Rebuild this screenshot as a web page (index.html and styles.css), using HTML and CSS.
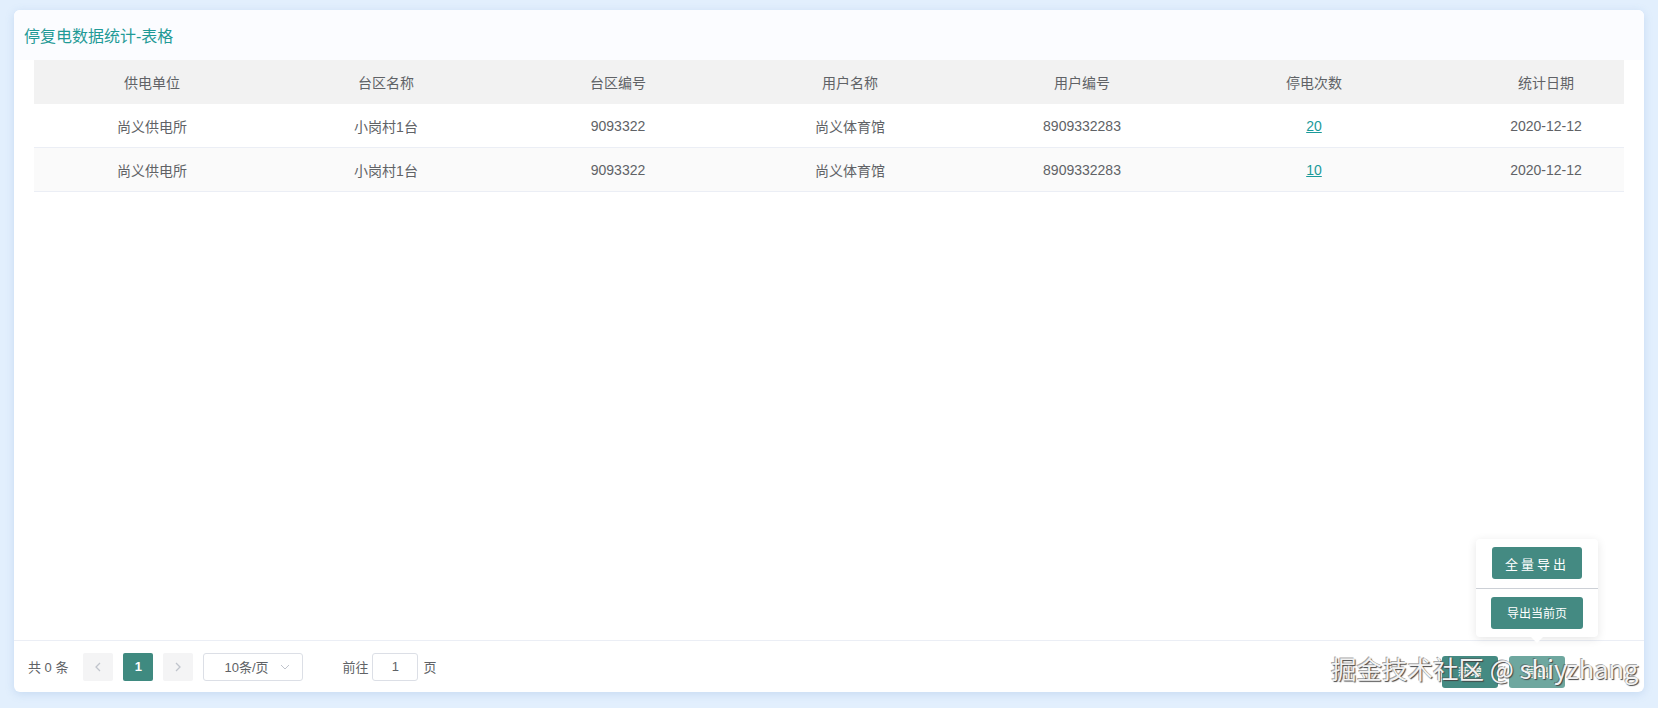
FILE: index.html
```html
<!DOCTYPE html>
<html lang="zh-CN">
<head>
<meta charset="utf-8">
<title>停复电数据统计-表格</title>
<link rel="stylesheet" href="styles.css">
</head>
<body>
<div class="card">
  <div class="card-header">停复电数据统计-表格</div>
  <div class="card-body">
    <div class="table-wrap">
      <div class="table">
        <div class="row head">
          <div class="cell">供电单位</div>
          <div class="cell">台区名称</div>
          <div class="cell">台区编号</div>
          <div class="cell">用户名称</div>
          <div class="cell">用户编号</div>
          <div class="cell">停电次数</div>
          <div class="cell">统计日期</div>
        </div>
        <div class="row">
          <div class="cell">尚义供电所</div>
          <div class="cell">小岗村1台</div>
          <div class="cell">9093322</div>
          <div class="cell">尚义体育馆</div>
          <div class="cell">8909332283</div>
          <div class="cell"><a class="link">20</a></div>
          <div class="cell">2020-12-12</div>
        </div>
        <div class="row striped">
          <div class="cell">尚义供电所</div>
          <div class="cell">小岗村1台</div>
          <div class="cell">9093322</div>
          <div class="cell">尚义体育馆</div>
          <div class="cell">8909332283</div>
          <div class="cell"><a class="link">10</a></div>
          <div class="cell">2020-12-12</div>
        </div>
      </div>
    </div>
  </div>
  <div class="footer">
    <div class="pagination">
      <span class="total">共 0 条</span>
      <span class="pbtn"><svg width="8" height="10" viewBox="0 0 8 10"><path d="M6 1 L2 5 L6 9" fill="none" stroke="#c0c4cc" stroke-width="1.3"/></svg></span>
      <span class="pager active">1</span>
      <span class="pbtn"><svg width="8" height="10" viewBox="0 0 8 10"><path d="M2 1 L6 5 L2 9" fill="none" stroke="#c0c4cc" stroke-width="1.3"/></svg></span>
      <span class="select"><span>10条/页</span><svg width="10" height="6" viewBox="0 0 10 6"><path d="M1 1 L5 5 L9 1" fill="none" stroke="#c0c4cc" stroke-width="1"/></svg></span>
      <span class="jump">前往<span class="jump-input">1</span>页</span>
    </div>
    <div class="actions">
      <span class="btn">新增</span>
      <span class="btn light">导出</span>
    </div>
  </div>
  <div class="popover">
    <div class="pop-item"><span class="btn wide spaced">全量导出</span></div>
    <div class="pop-item"><span class="btn wide">导出当前页</span></div>
    <span class="arrow"></span>
  </div>
</div>
<div class="watermark">掘金技术社区 @ shiyzhang</div>
</body>
</html>
```

FILE: styles.css
```css
html, body {
  margin: 0;
  padding: 0;
}
body {
  width: 1658px;
  height: 708px;
  background: #e2effd;
  font-family: "Liberation Sans", "Noto Sans CJK SC", sans-serif;
  color: #606266;
  position: relative;
  overflow: hidden;
}
.card {
  position: relative;
  margin: 10px 0 0 14px;
  width: 1630px;
  height: 682px;
  background: #fff;
  border-radius: 6px;
  box-shadow: 0 2px 8px rgba(120, 160, 210, 0.25);
  display: flex;
  flex-direction: column;
}
.card-header {
  height: 50px;
  flex: none;
  background: #fbfcff;
  border-radius: 6px 6px 0 0;
  padding-left: 10px;
  display: flex;
  align-items: center;
  font-size: 16px;
  color: #1f9a96;
  box-sizing: border-box;
}
.card-body {
  flex: 1;
  padding: 0 20px;
  min-height: 0;
}
.table-wrap {
  overflow: hidden;
  width: 1590px;
}
.table {
  width: 1630px;
  font-size: 14px;
}
.row {
  display: grid;
  grid-template-columns: 236px repeat(6, 232px);
  height: 44px;
  border-bottom: 1px solid #ebeef5;
  box-sizing: border-box;
  background: #fff;
}
.row.head {
  background: #f2f2f2;
  border-bottom: none;
}
.row.striped {
  background: #fafafa;
}
.cell {
  display: flex;
  align-items: center;
  justify-content: center;
  color: #606266;
}
.link {
  color: #1a9a9a;
  text-decoration: underline;
}
.footer {
  flex: none;
  height: 52px;
  border-top: 1px solid #ebeef5;
  display: flex;
  align-items: center;
  justify-content: space-between;
  padding: 0 79px 0 14px;
  box-sizing: border-box;
}
.pagination {
  display: flex;
  align-items: center;
  font-size: 13px;
  color: #606266;
}
.total {
  margin-right: 15px;
}
.pbtn, .pager {
  width: 30px;
  height: 28px;
  display: flex;
  align-items: center;
  justify-content: center;
  background: #f4f4f5;
  border-radius: 2px;
  margin-right: 10px;
}
.pager.active {
  background: #3f8a80;
  color: #fff;
  font-weight: bold;
}
.select {
  width: 100px;
  height: 28px;
  box-sizing: border-box;
  border: 1px solid #dcdfe6;
  border-radius: 3px;
  display: flex;
  align-items: center;
  justify-content: space-between;
  padding: 0 12px 0 20px;
  color: #606266;
}
.jump {
  margin-left: 39px;
  display: flex;
  align-items: center;
}
.jump-input {
  width: 46px;
  height: 28px;
  box-sizing: border-box;
  border: 1px solid #dcdfe6;
  border-radius: 3px;
  display: flex;
  align-items: center;
  justify-content: center;
  margin: 0 5px 0 4px;
}
.actions {
  display: flex;
  gap: 11px;
  margin-top: 10px;
}
.btn {
  display: inline-flex;
  align-items: center;
  justify-content: center;
  width: 56px;
  height: 32px;
  background: #448a82;
  color: #fff;
  border-radius: 3px;
  font-size: 12px;
}
.btn.light {
  background: #6ea79f;
}
.btn.wide {
  width: 92px;
}
.btn.spaced {
  width: 90px;
  letter-spacing: 3px;
  font-size: 13px;
}
.popover {
  position: absolute;
  left: 1462px;
  top: 529px;
  width: 122px;
  height: 98px;
  background: #fff;
  border-radius: 4px;
  box-shadow: 0 2px 10px rgba(0, 0, 0, 0.1);
  display: flex;
  flex-direction: column;
}
.pop-item {
  flex: 1;
  display: flex;
  align-items: center;
  justify-content: center;
}
.pop-item + .pop-item {
  border-top: 1px solid #ccd0d6;
}
.arrow {
  position: absolute;
  left: 55px;
  bottom: -6px;
  width: 0;
  height: 0;
  border-left: 6px solid transparent;
  border-right: 6px solid transparent;
  border-top: 6px solid #fff;
}
.watermark {
  position: absolute;
  left: 1331px;
  top: 649px;
  font-size: 25.5px;
  color: #f2f2f2;
  text-shadow: 1px 1px 1px #444, -1px -1px 0 rgba(80, 80, 80, 0.5);
  white-space: nowrap;
  font-family: "Noto Sans CJK SC", "Liberation Sans", sans-serif;
}
```
